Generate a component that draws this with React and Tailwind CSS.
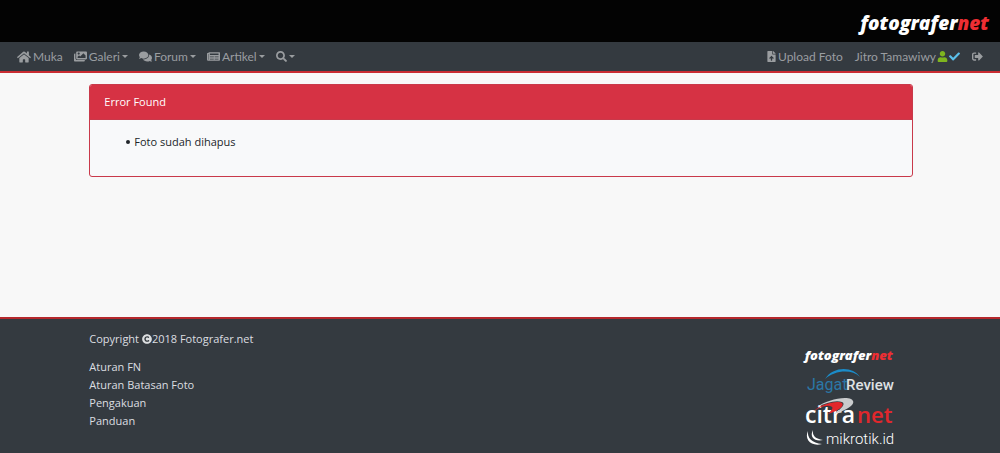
import React from 'react';
import {
  FaHome,
  FaImages,
  FaComments,
  FaNewspaper,
  FaSearch,
  FaFileUpload,
  FaUser,
  FaCheck,
  FaSignOutAlt,
  FaCopyright,
} from 'react-icons/fa';

const menus = [
  { label: 'Galeri', icon: FaImages },
  { label: 'Forum', icon: FaComments },
  { label: 'Artikel', icon: FaNewspaper },
];

const footerLinks = ['Aturan FN', 'Aturan Batasan Foto', 'Pengakuan', 'Panduan'];

const Caret = () => (
  <span className="border-x-[3px] border-t-[3px] border-x-transparent border-t-current" />
);

const FotografernetLogo = ({ className }) => (
  <span className={`block font-['Open_Sans',sans-serif] font-extrabold italic text-white ${className}`}>
    fotografer<span className="text-[#ee2e33]">net</span>
  </span>
);

const JagatReviewLogo = () => (
  <svg viewBox="0 0 90 24" className="h-6 w-[90px] overflow-visible" role="img" aria-label="JagatReview">
    <path d="M20 10 C28 -3 48 -3 55 8 C47 0 30 1 20 10Z" fill="#1b8cc9" />
    <text x="2" y="21" fontFamily="Roboto, sans-serif" fontSize="16" fill="#2b77a6">Jagat</text>
    <text x="41" y="21" fontFamily="Roboto, sans-serif" fontSize="15" fontWeight="500" fill="#dfe1e3">Review</text>
  </svg>
);

const CitranetLogo = () => (
  <svg viewBox="0 0 90 28" className="h-7 w-[90px] overflow-visible" role="img" aria-label="citranet">
    <text x="0" y="26" fontFamily="Open Sans, sans-serif" fontSize="23" fontWeight="600" fill="#ffffff">citra</text>
    <text x="52" y="26" fontFamily="Open Sans, sans-serif" fontSize="22" fontWeight="600" fill="#e1272c">net</text>
    <path d="M12 10 C20 4 38 -1 46 2 C53 6 43 13 29 17 C37 11 41 7 37 5 C30 3 21 6 12 10Z" fill="#c9cbcd" />
    <path d="M9 14 C16 7 32 3 37 6 C40 9 33 14 23 17 C28 12 29 10 25 9 C19 8 14 11 9 14Z" fill="#e1272c" />
  </svg>
);

const MikrotikLogo = () => (
  <svg viewBox="0 0 90 20" className="h-5 w-[90px] overflow-visible" role="img" aria-label="mikrotik.id">
    <path d="M3 2 C2 9 7 14 17 15 C6 18 -1 10 3 2Z" fill="#ffffff" />
    <path d="M8 1 C7 7 11 10 18 11 C10 13 4 8 8 1Z" fill="#ffffff" />
    <text x="21" y="15" fontFamily="Roboto, sans-serif" fontSize="15" fontWeight="300" fill="#ffffff">mikrotik.id</text>
  </svg>
);

const App = () => {
  return (
    <div className="flex min-h-screen flex-col bg-[#f8f8f8] font-['Open_Sans',sans-serif] text-[11px] leading-4 text-[#212529]">
      <header>
        <div className="flex h-[42px] items-center justify-end bg-[#030303] px-[11px] pt-1">
          <a href="#">
            <FotografernetLogo className="text-[19px] leading-7" />
          </a>
        </div>
        <nav className="flex h-[31px] items-center justify-between border-b-2 border-[#c92c32] bg-[#343a40] px-[17px] font-['Lato',sans-serif] text-[12px] text-[#9a9da0]">
          <div className="flex items-center gap-[11px]">
            <a href="#" className="flex items-center gap-[2px]">
              <FaHome className="size-[14px]" />
              Muka
            </a>
            {menus.map(({ label, icon: Icon }) => (
              <button key={label} type="button" className="flex items-center gap-[2px]">
                <Icon className="size-[13px]" />
                {label}
                <Caret />
              </button>
            ))}
            <button type="button" aria-label="Cari" className="flex items-center gap-[2px]">
              <FaSearch className="size-[11px]" />
              <Caret />
            </button>
          </div>
          <div className="flex items-center gap-3">
            <a href="#" className="flex items-center gap-px">
              <FaFileUpload className="size-[11px]" />
              Upload Foto
            </a>
            <a href="#" className="flex items-center gap-px">
              Jitro Tamawiwy
              <FaUser className="size-[11px] text-[#7fb51f]" />
              <FaCheck className="size-[11px] text-[#5bc0eb]" />
            </a>
            <a href="#" aria-label="Keluar">
              <FaSignOutAlt className="size-[11px]" />
            </a>
          </div>
        </nav>
      </header>

      <main className="mx-auto w-10/12 flex-1 pt-[11px] pr-1 pl-[6px]">
        <section className="overflow-hidden rounded-[3px] border border-[#c9394a] bg-[#f8f9fa]">
          <h1 className="border-b border-[#c9394a] bg-[#d63244] px-[14px] py-[9px] text-white">Error Found</h1>
          <ul className="pt-[14px] pb-[26px] pl-9">
            <li className="flex items-center gap-1 before:size-1 before:rounded-full before:bg-current before:content-['']">
              Foto sudah dihapus
            </li>
          </ul>
        </section>
      </main>

      <footer className="border-t-2 border-[#b5282c] bg-[#343a40] text-[#dcdee0]">
        <div className="mx-auto flex w-10/12 items-start justify-between pt-3 pr-1 pb-1 pl-[6px]">
          <div>
            <p className="flex items-center">
              Copyright&nbsp;
              <FaCopyright className="size-[10px]" />
              2018 Fotografer.net
            </p>
            <ul className="mt-[11px]">
              {footerLinks.map((link) => (
                <li key={link} className="leading-[18px]">
                  <a href="#">{link}</a>
                </li>
              ))}
            </ul>
          </div>
          <div className="mr-[18px] flex w-[90px] flex-col gap-1 pt-[14px]">
            <a href="#"><FotografernetLogo className="text-[13px] leading-5" /></a>
            <a href="#"><JagatReviewLogo /></a>
            <a href="#"><CitranetLogo /></a>
            <a href="#"><MikrotikLogo /></a>
          </div>
        </div>
      </footer>
    </div>
  );
};

export default App;
